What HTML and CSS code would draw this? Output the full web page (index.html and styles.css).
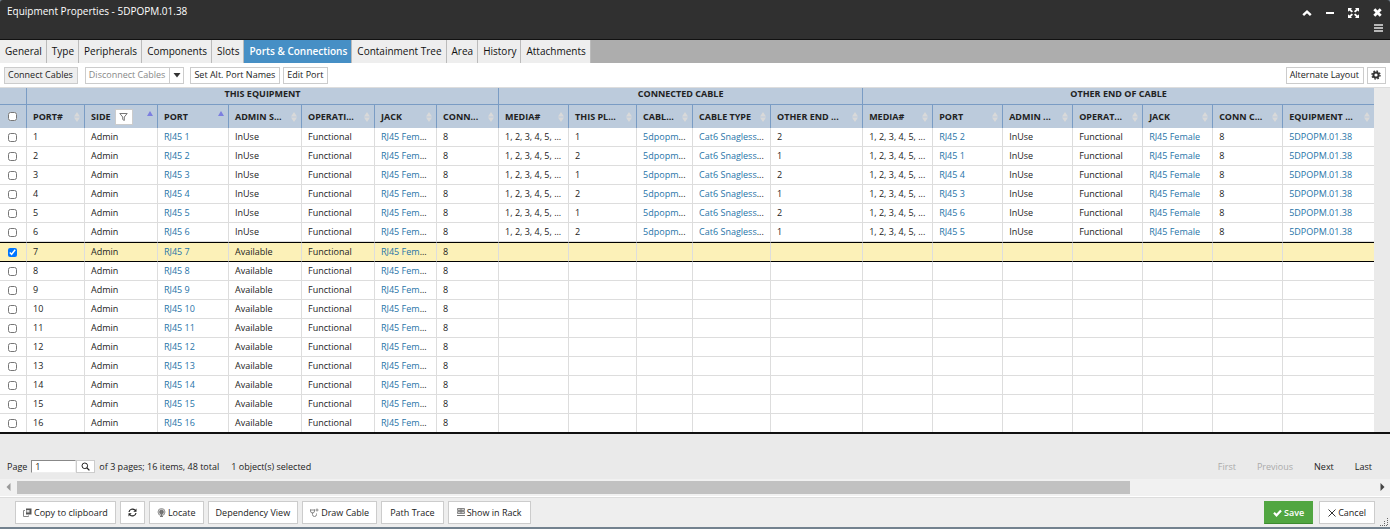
FILE: index.html
```html
<!DOCTYPE html>
<html lang="en">
<head>
    <meta charset="UTF-8">
    <meta name="viewport" content="width=device-width, initial-scale=1.0">
    <title>Equipment Properties - 5DPOPM.01.38</title>
    <link rel="stylesheet" href="styles.css">
</head>
<body>

    <!-- Title bar -->
    <header class="titlebar">
        <h1>Equipment Properties - 5DPOPM.01.38</h1>
        <div class="window-tools">
            <div class="window-buttons">
                <button aria-label="Collapse"><svg width="10" height="8" viewBox="0 0 10 8"><path d="M1.2 6.2L5 2.6l3.800 3.600" fill="none" stroke="#fff" stroke-width="2.400"/></svg></button>
                <button aria-label="Minimize"><svg width="8" height="8" viewBox="0 0 8 8"><rect y="3" width="8" height="2" fill="#fff"/></svg></button>
                <button aria-label="Maximize"><svg width="11" height="10" viewBox="0 0 11 10"><path d="M0 0h4L2.900 1.200 5 3.300 3.800 4.400 1.300 2.400 0 3.700zM11 0v3.700L9.700 2.400 7.200 4.400 6 3.300 8.100 1.200 7 0zM0 10V6.300l1.300 1.300 2.500-2L5 6.700 2.900 8.800 4 10zM11 10H7l1.100-1.200L6 6.700l1.200-1.100 2.500 2L11 6.300z" fill="#fff"/></svg></button>
                <button aria-label="Close"><svg width="9" height="9" viewBox="0 0 9 9"><path d="M1.300 1.300l6.400 6.400M7.700 1.300L1.300 7.700" stroke="#fff" stroke-width="2.800"/></svg></button>
            </div>
            <button class="menu-button" aria-label="Menu"><svg width="9" height="8" viewBox="0 0 9 8"><path d="M0 1h9M0 4h9M0 7h9" stroke="#e4e4e4" stroke-width="1.500"/></svg></button>
        </div>
    </header>

    <!-- Tabs -->
    <nav class="tabs">
        <a href="#">General</a>
        <a href="#">Type</a>
        <a href="#">Peripherals</a>
        <a href="#">Components</a>
        <a href="#">Slots</a>
        <a href="#" class="active">Ports &amp; Connections</a>
        <a href="#">Containment Tree</a>
        <a href="#">Area</a>
        <a href="#">History</a>
        <a href="#">Attachments</a>
    </nav>

    <!-- Toolbar -->
    <div class="toolbar">
        <button class="pressed">Connect Cables</button>
        <div class="split">
            <button disabled>Disconnect Cables</button>
            <button class="caret" aria-label="More disconnect options"><svg width="8" height="5" viewBox="0 0 8 5"><path d="M0.500 0h7L4 4.500z" fill="#333"/></svg></button>
        </div>
        <button>Set Alt. Port Names</button>
        <button>Edit Port</button>
        <button class="push">Alternate Layout</button>
        <button class="gear" aria-label="Settings"><svg width="10" height="10" viewBox="0 0 10 10"><circle cx="5" cy="5" r="2.600" fill="none" stroke="#333" stroke-width="2"/><circle cx="5" cy="5" r="4" fill="none" stroke="#333" stroke-width="1.400" stroke-dasharray="1.600 1.540"/></svg></button>
    </div>

    <!-- Ports grid -->
    <div class="grid">
        <table>
            <colgroup>
                <col class="w27"><col class="w58"><col class="w73"><col class="w71"><col class="w73"><col class="w73"><col class="w62"><col class="w62">
                <col class="w70"><col class="w68"><col class="w56"><col class="w78"><col class="w92">
                <col class="w70"><col class="w70"><col class="w70"><col class="w70"><col class="w70"><col class="w70"><col>
            </colgroup>
            <thead>
                <tr class="groups">
                    <th></th>
                    <th colspan="7">THIS EQUIPMENT</th>
                    <th colspan="5">CONNECTED CABLE</th>
                    <th colspan="7">OTHER END OF CABLE</th>
                </tr>
                <tr class="columns" id="columns"></tr>
            </thead>
            <tbody id="ports"></tbody>
        </table>
    </div>

    <!-- Pager -->
    <div class="pager">
        <label for="page">Page</label>
        <input type="text" id="page" value="1">
        <button class="go" aria-label="Go to page"><svg width="9" height="9" viewBox="0 0 9 9"><circle cx="3.800" cy="3.800" r="2.800" fill="none" stroke="#222"/><path d="M5.800 5.800l2.600 2.600" stroke="#222" stroke-width="1.300"/></svg></button>
        <span class="total">of 3 pages; 16 items, 48 total</span>
        <span class="selected-count">1 object(s) selected</span>
        <div class="pages">
            <button disabled>First</button>
            <button disabled>Previous</button>
            <button>Next</button>
            <button>Last</button>
        </div>
    </div>

    <div class="scrollbar">
        <svg width="5" height="8" viewBox="0 0 5 8"><path d="M4.500 0v8L0.500 4z" fill="#999"/></svg>
        <div class="track"><div class="thumb"></div></div>
        <svg width="5" height="8" viewBox="0 0 5 8"><path d="M0.500 0v8l4-4z" fill="#444"/></svg>
    </div>

    <!-- Footer actions -->
    <footer class="footer">
        <button><svg width="9" height="9" viewBox="0 0 9 9"><path d="M2 2.500H.5v6h5V7.500" fill="none" stroke="#888"/><path d="M3 .5h5.500v6H3z" fill="#555"/><path d="M3.500 2h3v2.500h-3z" fill="#ddd"/></svg>Copy to clipboard</button>
        <button aria-label="Refresh"><svg width="9" height="9" viewBox="0 0 9 9"><path d="M1 4a3.500 3.500 0 0 1 6-1.800M8 5a3.500 3.500 0 0 1-6 1.800" fill="none" stroke="#222" stroke-width="1.200"/><path d="M8.500 0.500v3.200H5.300zM.5 8.500V5.300h3.200z" fill="#222"/></svg></button>
        <button><svg width="9" height="9" viewBox="0 0 9 9"><circle cx="4.500" cy="4" r="3.500" fill="#ccc" stroke="#999"/><circle cx="4.500" cy="4" r="1.700" fill="#777" stroke="#666"/><path d="M4.500 4v4.500M3 8.500h3" stroke="#777"/></svg>Locate</button>
        <button>Dependency View</button>
        <button><svg width="9" height="9" viewBox="0 0 9 9"><path d="M.5 1.500v1.500a2 2 0 0 0 4 0V1.500M0 2h5M2.500 4.500v2A2 2 0 0 0 6.500 6.500V5.500M7 .5v3M5.500 2h3" fill="none" stroke="#888"/></svg>Draw Cable</button>
        <button class="wide">Path Trace</button>
        <button class="wide"><svg width="8" height="9" viewBox="0 0 8 9"><path d="M.5.5h7v2h-7zM.5 3.500h7v2h-7z" fill="#ccc" stroke="#888"/><path d="M0 7.500h8M4 .500v5" stroke="#777"/></svg>Show in Rack</button>
        <button class="save"><svg width="9" height="8" viewBox="0 0 9 8"><path d="M1 3.800l2.500 2.500L8 1.500" fill="none" stroke="#fff" stroke-width="2.200"/></svg>Save</button>
        <button class="wide"><svg width="8" height="8" viewBox="0 0 8 8"><path d="M.5.500l7 7M7.500.500l-7 7" stroke="#333"/></svg>Cancel</button>
        <svg class="grip" width="8" height="8" viewBox="0 0 8 8"><path d="M0 7.500h8M7.500 0v8M4.500 3v5" stroke="#666" stroke-dasharray="1 1"/></svg>
    </footer>

    <script src="script.js"></script>
</body>
</html>
```
FILE: styles.css
```css
* {
    box-sizing: border-box;
}
body {
    margin: 0;
    min-height: 100vh;
    display: flex;
    flex-direction: column;
    background: #73828f;
    color: #222;
    font-family: "Open Sans", sans-serif;
    font-size: 9px;
    line-height: 12px;
}
button, input {
    font: inherit;
    color: inherit;
    margin: 0;
}
button {
    display: inline-flex;
    align-items: center;
    justify-content: center;
    background: #fff;
    border: 1px solid #ccc;
    padding: 0 4px 0 3px;
    white-space: nowrap;
}
button:disabled {
    color: #888;
}

/* Title bar */
.titlebar {
    display: flex;
    justify-content: space-between;
    height: 40px;
    padding: 3px 7px;
    background: #303030;
    border-bottom: 1px solid #111;
    border-radius: 3px 3px 0 0;
}
.titlebar h1 {
    margin: 0;
    color: #fff;
    font-size: 10px;
    font-weight: 400;
    line-height: 16px;
}
.titlebar button {
    background: none;
    border: 0;
    padding: 0;
}
.window-tools {
    display: flex;
    flex-direction: column;
    align-items: flex-end;
    gap: 2px;
}
.window-buttons {
    display: flex;
    align-items: center;
    gap: 14px;
    height: 19px;
    padding-right: 1px;
}

/* Tabs */
.tabs {
    display: flex;
    height: 23px;
    background: #adadad;
}
.tabs a {
    padding: 0 4px 0 5px;
    background: #eee;
    border-right: 1px solid #bbb;
    color: #111;
    font-size: 10px;
    font-weight: 500;
    line-height: 22px;
    text-decoration: none;
}
.tabs .active {
    background: #468fc5;
    color: #fff;
    font-weight: 600;
}

/* Toolbar */
.toolbar {
    display: flex;
    align-items: center;
    gap: 3px;
    height: 24px;
    padding: 0 4px;
    background: #fff;
}
.toolbar button {
    height: 17px;
}
.toolbar .pressed {
    background: #eee;
}
.split {
    display: flex;
    margin: 0 3px 0 4px;
}
.split .caret {
    width: 14px;
    border-left: 0;
    padding: 0;
}
.toolbar .push {
    margin-left: auto;
}
.toolbar .gear {
    width: 19px;
}

/* Grid */
.grid {
    padding-right: 16px;
    background: #eaeaea;
    border-top: 1px solid #ddd;
    border-bottom: 2px solid #111;
}
table {
    width: 100%;
    table-layout: fixed;
    border-collapse: separate;
    border-spacing: 0;
    background: #fff;
}
.w27 { width: 27px; }
.w56 { width: 56px; }
.w58 { width: 58px; }
.w62 { width: 62px; }
.w68 { width: 68px; }
.w70 { width: 70px; }
.w71 { width: 71px; }
.w73 { width: 73px; }
.w78 { width: 78px; }
.w92 { width: 92px; }
th {
    padding: 0;
    background: #bccbdc;
    border-right: 1px solid #7a9cc4;
    font-size: 9px;
    font-weight: 700;
}
th:last-child, td:last-child {
    border-right: 0;
}
.groups th {
    height: 17px;
    padding-bottom: 4px;
    border-bottom: 1px solid #7a9cc4;
}
.columns th {
    height: 23px;
    text-align: left;
}
.head {
    display: flex;
    align-items: center;
    height: 16px;
    padding: 0 4px 0 6px;
    white-space: nowrap;
}
.head .sort {
    flex: none;
    margin-left: auto;
}
.head .asc {
    margin-bottom: 6px;
}
.filter {
    width: 18px;
    height: 16px;
    margin-left: 4px;
    padding: 0;
}
td {
    height: 19px;
    padding: 0 6px;
    border-right: 1px solid #ddd;
    border-bottom: 1px solid #ddd;
    white-space: nowrap;
}
tbody tr:last-child td {
    height: 18px;
    border-bottom: 0;
}
th.check, td.check {
    padding: 0 1px 0 0;
}
.check input {
    display: block;
    width: 9px;
    height: 9px;
    margin: 0 auto;
}
td a {
    color: #1f74a8;
    text-decoration: none;
}
.selected td {
    height: 20px;
    background: #fcf1b8;
    border-top: 1px solid #000;
    border-bottom-color: #000;
}

/* Pager */
.pager {
    display: flex;
    align-items: center;
    height: 45px;
    padding: 20px 18px 0 7px;
    background: #eaeaea;
}
.pager input {
    width: 45px;
    height: 13px;
    margin-left: 4px;
    padding: 0 3px;
    background: #fff;
    border: 1px solid #eee;
    border-top-color: #888;
    border-left-color: #888;
}
.pager .go {
    width: 19px;
    height: 13px;
}
.total {
    margin-left: 4px;
}
.selected-count {
    margin-left: 12px;
}
.pages {
    display: flex;
    gap: 21px;
    margin-left: auto;
}
.pages button {
    background: none;
    border: 0;
    padding: 0;
}
.pages button:disabled {
    color: #aaa;
}

/* Horizontal scrollbar */
.scrollbar {
    display: flex;
    align-items: center;
    gap: 6px;
    height: 18px;
    padding: 0 5px 1px 6px;
    background: #f1f1f1;
    border-bottom: 1px solid #fff;
}
.track {
    flex: 1;
}
.thumb {
    width: 82%;
    height: 13px;
    background: #c1c1c1;
}

/* Footer */
.footer {
    position: relative;
    display: flex;
    align-items: center;
    gap: 4px;
    height: 30px;
    padding: 0 15px;
    background: #eee;
    border-top: 1px solid #ddd;
}
.footer button {
    gap: 2px;
    height: 23px;
    padding: 0 7px;
}
.footer .wide {
    padding: 0 8px;
}
.footer .save {
    margin: 0 2px 0 auto;
    padding: 0 8px;
    background: #51a641;
    border-color: #51a641;
    border-bottom-color: #3d8a30;
    color: #fff;
    font-weight: 600;
}
.grip {
    position: absolute;
    right: 2px;
    bottom: 1px;
}
```
FILE: script.js
```js
// long names are shortened to fit their columns
const columns = ["PORT#", "SIDE", "PORT", "ADMIN S...", "OPERATI...", "JACK", "CONN...",
    "MEDIA#", "THIS PL...", "CABL...", "CABLE TYPE", "OTHER END ...",
    "MEDIA#", "PORT", "ADMIN ...", "OPERAT...", "JACK", "CONN C...", "EQUIPMENT ..."];

const sortBoth = '<svg class="sort" width="6" height="10" viewBox="0 0 6 10"><path d="M3 0l3 4.500H0zM3 10l3-4.500H0z" fill="#d9d9d9"/></svg>';
const sortAsc = '<svg class="sort asc" width="6" height="5" viewBox="0 0 6 5"><path d="M3 0l3 5H0z" fill="#7c7fe0"/></svg>';
const filter = '<button class="filter" aria-label="Filter"><svg width="9" height="8" viewBox="0 0 9 8"><path d="M.8.500h7.400L5.300 4v3.500l-1.600-1V4z" fill="none" stroke="#777"/></svg></button>';

let head = '<th class="check"><input type="checkbox" aria-label="Select all"></th>';
columns.forEach(function (name, i) {
    const sorted = i === 1 || i === 2;
    head += '<th><div class="head"><span>' + name + "</span>" +
        (i === 1 ? filter : "") + (sorted ? sortAsc : sortBoth) + "</div></th>";
});
document.getElementById("columns").innerHTML = head;

const link = text => '<a href="#">' + text + "</a>";

let rows = "";
for (let n = 1; n <= 16; n++) {
    const used = n <= 6;
    const selected = n === 7;
    // ports are cabled in pairs: 1-2, 3-4, 5-6
    const other = n % 2 ? n + 1 : n - 1;
    const cells = [n, "Admin", link("RJ45 " + n), used ? "InUse" : "Available", "Functional", link("RJ45 Fem") + "...", 8];
    if (used) {
        cells.push("1, 2, 3, 4, 5, ...", n % 2 ? 1 : 2, link("5dpopm") + "...", link("Cat6 Snagless") + "...", n % 2 ? 2 : 1,
            "1, 2, 3, 4, 5, ...", link("RJ45 " + other), "InUse", "Functional", link("RJ45 Female"), 8, link("5DPOPM.01.38"));
    } else {
        for (let i = 0; i < 12; i++) cells.push("");
    }
    rows += "<tr" + (selected ? ' class="selected"' : "") + '><td class="check"><input type="checkbox" aria-label="Select port ' + n + '"' +
        (selected ? " checked" : "") + "></td>" + cells.map(c => "<td>" + c + "</td>").join("") + "</tr>";
}
document.getElementById("ports").innerHTML = rows;
```
